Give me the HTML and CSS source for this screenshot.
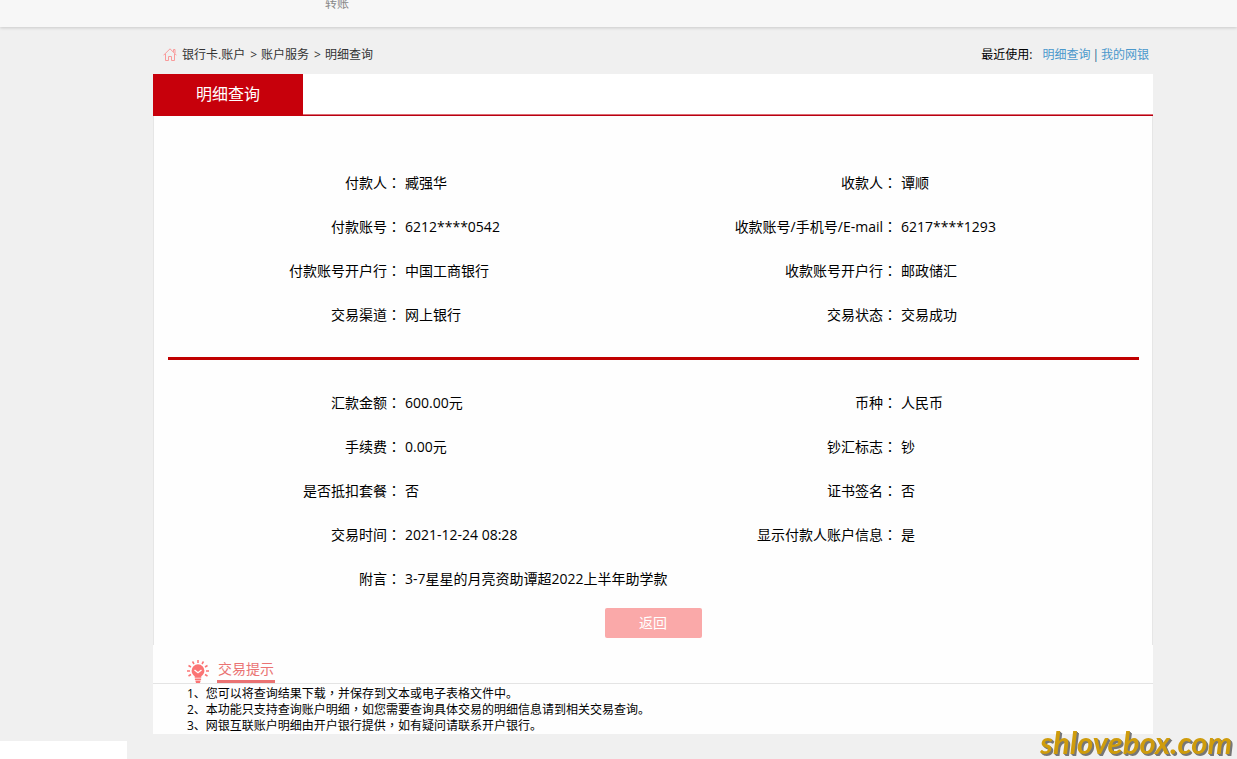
FILE: index.html
```html
<!DOCTYPE html>
<html lang="zh-CN">
<head>
<meta charset="utf-8">
<meta name="viewport" content="width=device-width, initial-scale=1">
<title>明细查询</title>
<link rel="stylesheet" href="styles.css">
</head>
<body>
<header class="topbar"><a class="topbar-link" href="#">转账</a></header>
<div class="page">
  <div class="crumb-row">
    <nav class="crumbs" aria-label="当前位置">
      <svg class="home" viewBox="0 0 14 13" aria-hidden="true"><path d="M.5 7.300 7 .8l6.500 6.500M10.500 3.800V1.500h1.500v3.800M2.500 6v6.500h3V8.500h3v4h3V6"/></svg>
      <span>银行卡.账户</span><span class="sep">&gt;</span><span>账户服务</span><span class="sep">&gt;</span><span>明细查询</span>
    </nav>
    <div class="recent"><span class="recent-label">最近使用:</span><a href="#">明细查询</a><span class="bar">|</span><a href="#">我的网银</a></div>
  </div>
  <main>
    <div class="tabs"><h1 class="tab">明细查询</h1></div>
    <section class="panel">
      <dl class="fields">
        <dt>付款人<span class="mid" lang="zh-Hant">：</span></dt><dd>臧强华</dd>
        <dt>收款人<span class="mid" lang="zh-Hant">：</span></dt><dd>谭顺</dd>
        <dt>付款账号<span class="mid" lang="zh-Hant">：</span></dt><dd>6212****0542</dd>
        <dt>收款账号/手机号/E-mail<span class="mid" lang="zh-Hant">：</span></dt><dd>6217****1293</dd>
        <dt>付款账号开户行<span class="mid" lang="zh-Hant">：</span></dt><dd>中国工商银行</dd>
        <dt>收款账号开户行<span class="mid" lang="zh-Hant">：</span></dt><dd>邮政储汇</dd>
        <dt>交易渠道<span class="mid" lang="zh-Hant">：</span></dt><dd>网上银行</dd>
        <dt>交易状态<span class="mid" lang="zh-Hant">：</span></dt><dd>交易成功</dd>
      </dl>
      <hr class="divider">
      <dl class="fields">
        <dt>汇款金额<span class="mid" lang="zh-Hant">：</span></dt><dd>600.00元</dd>
        <dt>币种<span class="mid" lang="zh-Hant">：</span></dt><dd>人民币</dd>
        <dt>手续费<span class="mid" lang="zh-Hant">：</span></dt><dd>0.00元</dd>
        <dt>钞汇标志<span class="mid" lang="zh-Hant">：</span></dt><dd>钞</dd>
        <dt>是否抵扣套餐<span class="mid" lang="zh-Hant">：</span></dt><dd>否</dd>
        <dt>证书签名<span class="mid" lang="zh-Hant">：</span></dt><dd>否</dd>
        <dt>交易时间<span class="mid" lang="zh-Hant">：</span></dt><dd>2021-12-24 08:28</dd>
        <dt>显示付款人账户信息<span class="mid" lang="zh-Hant">：</span></dt><dd>是</dd>
        <dt>附言<span class="mid" lang="zh-Hant">：</span></dt><dd class="wide">3-7星星的月亮资助谭超2022上半年助学款</dd>
      </dl>
      <div class="actions"><button class="back" type="button">返回</button></div>
    </section>
    <section class="tips">
      <div class="tips-head">
        <svg class="bulb" viewBox="0 0 24 24" aria-hidden="true">
          <path class="rays" d="M12 1v3M6.500 2.500l1.500 2.500M17.500 2.500 16 5M2.500 6.500 5 8M21.500 6.500 19 8M1 12h3M20 12h3M2.500 17 5 15.500M21.500 17 19 15.500"/>
          <path class="glass" d="M12 5.300a6.400 6.400 0 0 0-6.400 6.400c0 2.700 1.500 4.300 3.100 5.600v1.500h6.600v-1.500c1.600-1.300 3.100-2.900 3.100-5.600A6.400 6.400 0 0 0 12 5.300zM8.900 19.600h6.200v1.300H8.900zM9.300 21.600h5.400L14 24h-4z"/>
          <path class="smile" d="m8.500 11 3.500 2.700 3.500-2.700"/>
        </svg>
        <h2 class="tips-title">交易提示</h2>
      </div>
      <div class="tips-list">
        <p>1、您可以将查询结果下载<span class="mid" lang="zh-Hant">，</span>并保存到文本或电子表格文件中。</p>
        <p>2、本功能只支持查询账户明细<span class="mid" lang="zh-Hant">，</span>如您需要查询具体交易的明细信息请到相关交易查询。</p>
        <p>3、网银互联账户明细由开户银行提供<span class="mid" lang="zh-Hant">，</span>如有疑问请联系开户银行。</p>
      </div>
    </section>
  </main>
</div>
<div class="status"></div>
<div class="watermark">shlovebox.com</div>
</body>
</html>
```
FILE: styles.css
```css
* { box-sizing: border-box; margin: 0; padding: 0; }
body {
  display: flex;
  flex-direction: column;
  min-height: 100vh;
  background: #f0f0f0;
  color: #000;
  font: 12px/16px "Open Sans", "Noto Sans CJK SC", sans-serif;
}
a { color: #4a98cc; text-decoration: none; }
.topbar {
  height: 27px;
  flex: none;
  padding-left: 325px;
  background: #f7f7f7;
  box-shadow: 0 1px 3px rgba(0, 0, 0, .16);
}
.topbar-link { display: block; color: #888; line-height: 8px; }
.page { padding: 0 84px 0 153px; }
.crumb-row {
  display: flex;
  justify-content: space-between;
  align-items: center;
  height: 47px;
  padding: 8px 4px 0 10px;
}
.crumbs, .recent { display: flex; align-items: center; }
.crumbs { color: #333; }
.home { width: 14px; height: 13px; margin-right: 5px; fill: none; stroke: #f99a9a; }
.sep { margin: 0 4px 0 5px; }
.recent-label { margin-right: 10px; }
.bar { margin: 0 2px; color: #26648c; }
.tabs { height: 42px; background: linear-gradient(#dd6b72, #dd6b72) 0 40px / 100% 1px no-repeat, linear-gradient(#b80011, #b80011) 0 41px / 100% 1px no-repeat, #fff; }
.tab { width: 150px; height: 42px; background: #c7000b; color: #fff; font-size: 16px; font-weight: 400; line-height: 40px; text-align: center; }
.panel { padding: 45px 3px 7px; border: solid #e6e6e6; border-width: 0 1px; background: #fefefe; }
.fields { display: grid; grid-template-columns: repeat(4, 1fr); font-size: 14px; line-height: 44px; }
.fields dt { padding-right: 4px; text-align: right; white-space: nowrap; }
.fields dd { white-space: nowrap; }
.fields .wide { grid-column: span 3; }
.mid { font-family: "Noto Sans CJK TC", sans-serif; line-height: 1; }
.divider { height: 3px; margin: 20px 10px 21px 11px; border: 0; background: #c00000; }
.actions { display: flex; justify-content: center; padding-top: 7px; }
.back { width: 97px; height: 30px; border: 0; border-radius: 2px; background: #faa9a9; color: #fff; font: inherit; font-size: 14px; }
.tips { background: #fefefe; }
.tips-head { display: flex; align-items: flex-end; height: 39px; padding-left: 33px; border-bottom: 1px solid #e4e4e4; }
.bulb { width: 24px; height: 24px; margin-right: 7px; }
.rays { fill: none; stroke: #fb7474; stroke-width: 1.5; }
.glass { fill: #fb7474; }
.smile { fill: none; stroke: #fff; stroke-width: 1.4; }
.tips-title { padding: 0 1px; border-bottom: 3px solid #ea7373; color: #ea7373; font-size: 14px; font-weight: 400; line-height: 22px; }
.tips-list { padding: 2px 34px 0; }
.status { width: 127px; height: 18px; margin-top: auto; background: #fff; }
.watermark {
  position: fixed;
  right: 5px;
  bottom: 0;
  color: #cf9c0c;
  font: italic 700 31px/34px Lato, sans-serif;
  text-shadow: 1px 1px 0 #777, 2px 2px 0 #777;
}
```
